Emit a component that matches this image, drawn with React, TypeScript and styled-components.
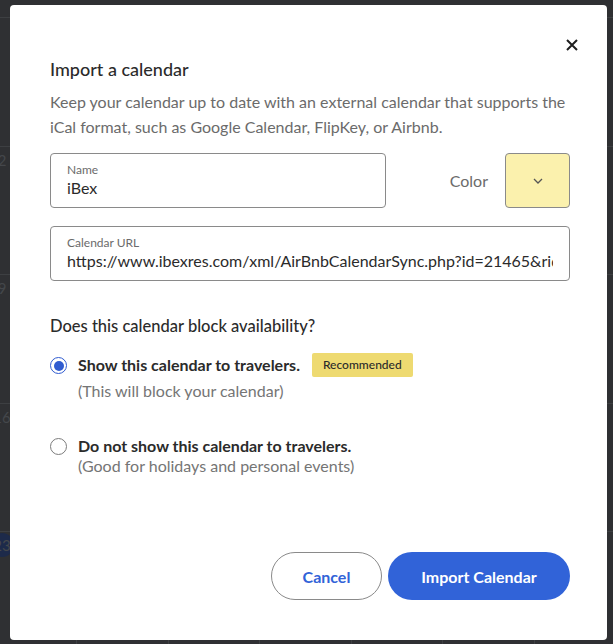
import React from 'react';
import styled, { createGlobalStyle } from 'styled-components';

const GlobalStyle = createGlobalStyle`
    * {
        box-sizing: border-box;
    }

    body {
        margin: 0;
        font-family: Lato, 'Open Sans', sans-serif;
        background: #2f3033;
    }
`;

const Page = styled.div`
    position: relative;
    width: 613px;
    height: 644px;
    overflow: hidden;
    background: #2f3033;
`;

const Calendar = styled.div`
    display: grid;
    grid-template-columns: repeat(7, 1fr);
    grid-auto-rows: 128.5px;
    margin-top: 17px;
    margin-left: -14px;
    width: 640px;
`;

const Day = styled.div`
    border-top: 1px solid #3d3f42;
    border-right: 1px solid #3d3f42;
    padding: 1px 4px;
    font-size: 15px;
    color: #44474b;
`;

const DayNumber = styled.span<{ $today?: boolean }>`
    display: inline-flex;
    align-items: center;
    justify-content: center;
    width: 24px;
    height: 24px;
    border-radius: 50%;
    background: ${(p) => (p.$today ? '#1d2a4a' : 'transparent')};
`;

const Modal = styled.div`
    position: absolute;
    top: 5px;
    left: 10px;
    width: 597px;
    height: 635px;
    background: #fff;
    border-radius: 4px;
    padding: 31px 37px 0 40px;
    display: flex;
    flex-direction: column;
`;

const CloseRow = styled.div`
    display: flex;
    justify-content: flex-end;
    height: 18px;
`;

const CloseButton = styled.button`
    border: none;
    background: none;
    padding: 0;
    margin-right: -11px;
    width: 18px;
    height: 18px;
    display: flex;
    align-items: center;
    justify-content: center;
    cursor: pointer;
`;

const Title = styled.h2`
    margin: 3px 0 0;
    font-size: 18px;
    font-weight: 500;
    color: #2b2b2b;
    line-height: 24px;
`;

const Description = styled.p`
    margin: 8px 0 0;
    max-width: 517px;
    font-size: 16px;
    line-height: 25px;
    color: #6b6b6b;
`;

const FieldRow = styled.div`
    display: flex;
    align-items: center;
    margin-top: 14px;
`;

const Field = styled.label<{ $width?: string }>`
    display: flex;
    flex-direction: column;
    width: ${(p) => p.$width || '100%'};
    height: 55px;
    border: 1px solid #8a8a8a;
    border-radius: 4px;
    padding: 8px 16px 0;
    overflow: hidden;
`;

const FieldLabel = styled.span`
    font-size: 12px;
    line-height: 16px;
    color: #6b6b6b;
`;

const FieldValue = styled.span`
    font-size: 16px;
    line-height: 20px;
    color: #2b2b2b;
    white-space: nowrap;
    overflow: hidden;
`;

const ColorLabel = styled.span`
    margin-left: auto;
    margin-right: 17px;
    font-size: 16px;
    color: #6b6b6b;
`;

const Swatch = styled.button<{ $color: string }>`
    width: 65px;
    height: 55px;
    border: 1px solid #8a8a8a;
    border-radius: 4px;
    background: ${(p) => p.$color};
    display: flex;
    align-items: center;
    justify-content: center;
    padding: 0;
`;

const UrlField = styled(Field)`
    margin-top: 18px;
`;

const Question = styled.h3`
    margin: 34px 0 0;
    font-size: 16.5px;
    font-weight: 500;
    color: #2b2b2b;
    line-height: 22px;
`;

const Option = styled.label<{ $gap: number }>`
    display: grid;
    grid-template-columns: 28px 1fr;
    margin-top: ${(p) => p.$gap}px;
    cursor: pointer;
`;

const Radio = styled.span<{ $checked?: boolean }>`
    width: 17px;
    height: 17px;
    border-radius: 50%;
    border: 1.5px solid ${(p) => (p.$checked ? '#2f5bd0' : '#7c7c7c')};
    margin-top: 4px;
    display: flex;
    align-items: center;
    justify-content: center;

    &::after {
        content: '';
        width: 10px;
        height: 10px;
        border-radius: 50%;
        background: ${(p) => (p.$checked ? '#2f5bd0' : 'transparent')};
    }
`;

const OptionTitle = styled.div`
    display: flex;
    align-items: center;
    gap: 12px;
    font-size: 16px;
    font-weight: 700;
    color: #2b2b2b;
    line-height: 24px;
`;

const OptionHint = styled.div<{ $spaced?: boolean }>`
    grid-column: 2;
    margin-top: ${(p) => (p.$spaced ? '4px' : '-2px')};
    font-size: 16px;
    line-height: 20px;
    color: #757575;
`;

const Badge = styled.span`
    background: #eeda71;
    border-radius: 2px;
    padding: 0 11px;
    font-size: 12px;
    font-weight: 500;
    line-height: 24px;
    color: #2b2b2b;
`;

const Footer = styled.div`
    margin-top: auto;
    margin-bottom: 40px;
    display: flex;
    justify-content: flex-end;
    gap: 6px;
`;

const Button = styled.button<{ $primary?: boolean }>`
    height: 48px;
    border-radius: 24px;
    font-family: inherit;
    font-size: 16px;
    font-weight: 700;
    cursor: pointer;
    padding: 0;
    width: ${(p) => (p.$primary ? '182px' : '111px')};
    border: ${(p) => (p.$primary ? 'none' : '1px solid #8a8a8a')};
    background: ${(p) => (p.$primary ? '#3163d8' : '#fff')};
    color: ${(p) => (p.$primary ? '#fff' : '#3163d8')};
`;

const days = [
    [null, null, null, null, null, null, null],
    [2, 3, 4, 5, 6, 7, 8],
    [9, 10, 11, 12, 13, 14, 15],
    [16, 17, 18, 19, 20, 21, 22],
    [23, 24, 25, 26, 27, 28, 29],
];

export default function App() {
    return (
        <Page>
            <GlobalStyle />
            <Calendar>
                {days.flat().map((d, i) => (
                    <Day key={i}>
                        {d && <DayNumber $today={d === 23}>{d}</DayNumber>}
                    </Day>
                ))}
            </Calendar>

            <Modal>
                <CloseRow>
                    <CloseButton aria-label="Close">
                        <svg width="12" height="12" viewBox="0 0 12 12">
                            <path d="M1 1 L11 11 M11 1 L1 11" stroke="#1e1e1e" strokeWidth="2" />
                        </svg>
                    </CloseButton>
                </CloseRow>

                <Title>Import a calendar</Title>
                <Description>
                    Keep your calendar up to date with an external calendar that supports the iCal
                    format, such as Google Calendar, FlipKey, or Airbnb.
                </Description>

                <FieldRow>
                    <Field $width="336px">
                        <FieldLabel>Name</FieldLabel>
                        <FieldValue>iBex</FieldValue>
                    </Field>
                    <ColorLabel>Color</ColorLabel>
                    <Swatch $color="#fbf1ad" aria-label="Color">
                        <svg width="12" height="8" viewBox="0 0 12 8">
                            <path d="M2 2 L6 6 L10 2" fill="none" stroke="#555" strokeWidth="1.3" />
                        </svg>
                    </Swatch>
                </FieldRow>

                <UrlField>
                    <FieldLabel>Calendar URL</FieldLabel>
                    <FieldValue>
                        https://www.ibexres.com/xml/AirBnbCalendarSync.php?id=21465&amp;rid=1
                    </FieldValue>
                </UrlField>

                <Question>Does this calendar block availability?</Question>

                <Option $gap={16}>
                    <Radio $checked />
                    <OptionTitle>
                        Show this calendar to travelers.
                        <Badge>Recommended</Badge>
                    </OptionTitle>
                    <OptionHint $spaced>(This will block your calendar)</OptionHint>
                </Option>

                <Option $gap={33}>
                    <Radio />
                    <OptionTitle>Do not show this calendar to travelers.</OptionTitle>
                    <OptionHint>(Good for holidays and personal events)</OptionHint>
                </Option>

                <Footer>
                    <Button>Cancel</Button>
                    <Button $primary>Import Calendar</Button>
                </Footer>
            </Modal>
        </Page>
    );
}
